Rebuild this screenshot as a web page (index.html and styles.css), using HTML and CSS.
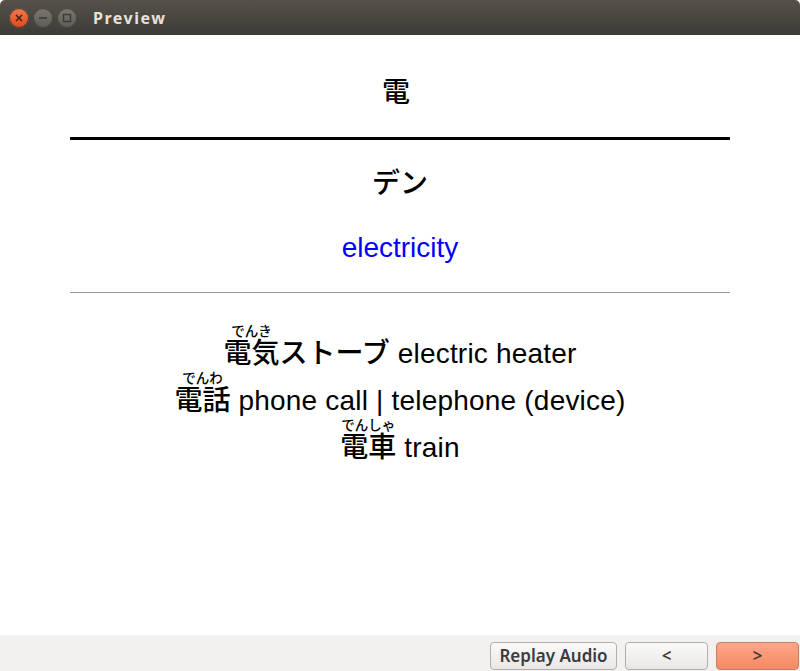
FILE: index.html
```html
<!DOCTYPE html>
<html lang="ja">

<head>
    <meta charset="UTF-8">
    <title>Preview</title>
    <link rel="stylesheet" href="styles.css">
</head>

<body>
    <div class="window">
        <header class="titlebar">
            <div class="window-buttons">
                <span class="win-btn win-close">
                    <svg width="10" height="10" viewBox="0 0 10 10"><path d="M2 2l6 6M8 2l-6 6" stroke="#4a2012" stroke-width="1.6" fill="none"/></svg>
                </span>
                <span class="win-btn">
                    <svg width="10" height="10" viewBox="0 0 10 10"><path d="M1 5h8" stroke="#3c3b37" stroke-width="1.6" fill="none"/></svg>
                </span>
                <span class="win-btn">
                    <svg width="10" height="10" viewBox="0 0 10 10"><rect x="1.5" y="1.5" width="7" height="7" stroke="#3c3b37" stroke-width="1.4" fill="none"/></svg>
                </span>
            </div>
            <span class="title">Preview</span>
        </header>

        <main class="card">
            <div class="kanji">電</div>
            <hr class="rule-heavy">
            <div class="reading">デン</div>
            <div class="meaning">electricity</div>
            <hr class="rule-light">
            <div class="examples">
                <div class="example"><ruby class="word">電気<rt>でんき</rt></ruby><span class="word">ストーブ</span> electric heater</div>
                <div class="example"><ruby class="word">電話<rt>でんわ</rt></ruby> phone call | telephone (device)</div>
                <div class="example"><ruby class="word">電車<rt>でんしゃ</rt></ruby> train</div>
            </div>
        </main>

        <footer class="actions">
            <button class="btn btn-replay">Replay Audio</button>
            <button class="btn btn-nav">&lt;</button>
            <button class="btn btn-nav btn-next">&gt;</button>
        </footer>
    </div>
</body>

</html>
```

FILE: styles.css
```css
html,
body {
    margin: 0;
    height: 100%;
    overflow: hidden;
}

body {
    font-family: "Liberation Sans", "Noto Sans CJK JP", sans-serif;
    color: #000;
    background-color: #fff;
}

.window {
    display: flex;
    flex-direction: column;
    height: 671px;
}

.titlebar {
    display: flex;
    align-items: center;
    height: 35px;
    padding-left: 9px;
    background: linear-gradient(#56524b, #3d3b36);
    border-radius: 5px 5px 0 0;
}

.window-buttons {
    display: flex;
    gap: 4px;
}

.win-btn {
    display: flex;
    align-items: center;
    justify-content: center;
    width: 20px;
    height: 20px;
    border-radius: 50%;
    background: linear-gradient(#7b7871, #5e5c56);
    box-shadow: inset 0 0 0 1px #45433e;
}

.win-close {
    background: linear-gradient(#f4794a, #dd4a1e);
}

.title {
    margin-left: 16px;
    font-family: "Noto Sans", sans-serif;
    font-size: 16px;
    font-weight: 700;
    letter-spacing: 1.5px;
    color: #e6e2d9;
}

.card {
    flex: 1;
    padding: 0 70px;
    text-align: center;
    background-color: #fff;
}

.kanji {
    margin: 38px 0 0 -8px;
    font-size: 28px;
    line-height: 40px;
    font-weight: 500;
}

.rule-heavy {
    height: 3px;
    margin: 24px 0 0;
    border: none;
    background-color: #000;
}

.reading {
    margin-top: 24px;
    font-size: 28px;
    line-height: 40px;
    font-weight: 500;
}

.meaning {
    margin-top: 24px;
    font-size: 28px;
    line-height: 40px;
    color: #00f;
}

.rule-light {
    height: 1px;
    margin: 24px 0 0;
    border: none;
    background-color: #999;
}

.examples {
    margin-top: 31px;
    font-size: 28px;
    letter-spacing: 0.2px;
}

.example {
    height: 47px;
    line-height: 47px;
}

.word {
    font-weight: 500;
    letter-spacing: 0;
}

ruby {
    ruby-align: center;
}

ruby rt {
    font-size: 13.5px;
    line-height: 16px;
    font-weight: 500;
}

.actions {
    display: flex;
    justify-content: flex-end;
    align-items: flex-end;
    gap: 8px;
    height: 36px;
    padding: 0 1px 1px 0;
    box-sizing: border-box;
    background-color: #f2f1f0;
}

.btn {
    height: 28px;
    padding: 0 0 2px;
    font-family: "Noto Sans", sans-serif;
    font-size: 17px;
    font-weight: 600;
    color: #3c3c3c;
    background: linear-gradient(#fafafa, #e9e7e5);
    border: 1px solid #b3aea8;
    border-radius: 4px;
}

.btn-replay {
    width: 127px;
}

.btn-nav {
    width: 83px;
}

.btn-next {
    background: linear-gradient(#fca688, #f58a62);
    border-color: #c58168;
}
```
